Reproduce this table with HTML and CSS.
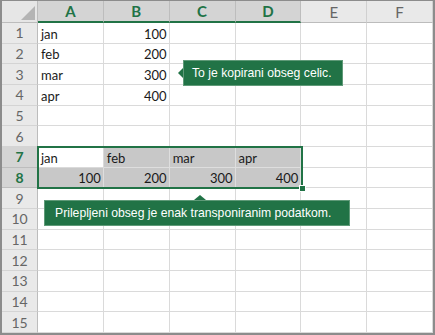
FILE: index.html
```html
<!DOCTYPE html>
<html>
<head>
<meta charset="utf-8">
<link rel="stylesheet" href="styles.css">
</head>
<body>
<div class="frame">
  <div class="sheet">
    <div class="corner"><svg width="14" height="14" viewBox="0 0 14 14"><polygon points="14,0 14,14 0,14" fill="#b4b4b4"/></svg></div>
    <div class="ch sel">A</div><div class="ch sel">B</div><div class="ch sel">C</div><div class="ch sel">D</div><div class="ch">E</div><div class="ch">F</div>

    <div class="rh">1</div><div class="c">jan</div><div class="c r">100</div><div class="c"></div><div class="c"></div><div class="c"></div><div class="c"></div>
    <div class="rh">2</div><div class="c">feb</div><div class="c r">200</div><div class="c"></div><div class="c"></div><div class="c"></div><div class="c"></div>
    <div class="rh">3</div><div class="c">mar</div><div class="c r">300</div><div class="c"></div><div class="c"></div><div class="c"></div><div class="c"></div>
    <div class="rh">4</div><div class="c">apr</div><div class="c r">400</div><div class="c"></div><div class="c"></div><div class="c"></div><div class="c"></div>
    <div class="rh">5</div><div class="c"></div><div class="c"></div><div class="c"></div><div class="c"></div><div class="c"></div><div class="c"></div>
    <div class="rh">6</div><div class="c"></div><div class="c"></div><div class="c"></div><div class="c"></div><div class="c"></div><div class="c"></div>
    <div class="rh sel">7</div><div class="c">jan</div><div class="c g">feb</div><div class="c g">mar</div><div class="c g">apr</div><div class="c"></div><div class="c"></div>
    <div class="rh sel">8</div><div class="c g r">100</div><div class="c g r">200</div><div class="c g r">300</div><div class="c g r">400</div><div class="c"></div><div class="c"></div>
    <div class="rh">9</div><div class="c"></div><div class="c"></div><div class="c"></div><div class="c"></div><div class="c"></div><div class="c"></div>
    <div class="rh">10</div><div class="c"></div><div class="c"></div><div class="c"></div><div class="c"></div><div class="c"></div><div class="c"></div>
    <div class="rh">11</div><div class="c"></div><div class="c"></div><div class="c"></div><div class="c"></div><div class="c"></div><div class="c"></div>
    <div class="rh">12</div><div class="c"></div><div class="c"></div><div class="c"></div><div class="c"></div><div class="c"></div><div class="c"></div>
    <div class="rh">13</div><div class="c"></div><div class="c"></div><div class="c"></div><div class="c"></div><div class="c"></div><div class="c"></div>
    <div class="rh">14</div><div class="c"></div><div class="c"></div><div class="c"></div><div class="c"></div><div class="c"></div><div class="c"></div>
    <div class="rh">15</div><div class="c"></div><div class="c"></div><div class="c"></div><div class="c"></div><div class="c"></div><div class="c"></div>
  </div>
  <div class="selection"><span class="handle"></span></div>
  <div class="callout callout-left">To je kopirani obseg celic.</div>
  <div class="callout callout-up">Prilepljeni obseg je enak transponiranim podatkom.</div>
</div>
</body>
</html>
```
FILE: styles.css
```css
html, body {
  margin: 0;
  padding: 0;
  background: #ffffff;
}
.frame {
  position: relative;
  width: 435px;
  height: 335px;
  box-sizing: border-box;
  border: 2px solid #8c8c8c;
  border-top-width: 1px;
  overflow: hidden;
  font-family: Lato, "Noto Sans", sans-serif;
}
.sheet {
  display: grid;
  grid-template-columns: 36px repeat(6, 1fr);
  grid-template-rows: 22px repeat(15, 1fr);
  height: 100%;
}
.corner {
  background: #e6e6e6;
  border-right: 1px solid #bcbcbc;
  border-bottom: 1px solid #bcbcbc;
  display: flex;
  align-items: flex-end;
  justify-content: flex-end;
  padding: 0 2px 2px 0;
  box-sizing: border-box;
}
.ch {
  background: #e9e9e9;
  border-right: 1px solid #d0d0d0;
  border-bottom: 1px solid #bcbcbc;
  color: #666666;
  font-size: 15px;
  display: flex;
  align-items: center;
  justify-content: center;
  box-sizing: border-box;
}
.ch.sel {
  background: #d4d4d4;
  color: #217346;
  font-weight: bold;
  border-bottom: 2px solid #217346;
  border-right-color: #bdbdbd;
}
.rh {
  background: #e9e9e9;
  border-right: 1px solid #bcbcbc;
  border-bottom: 1px solid #d4d4d4;
  color: #666666;
  font-size: 14px;
  display: flex;
  align-items: center;
  justify-content: center;
  box-sizing: border-box;
}
.rh.sel {
  background: #d4d4d4;
  color: #217346;
  font-weight: bold;
  border-bottom-color: #bdbdbd;
}
.c {
  border-right: 1px solid #dadada;
  border-bottom: 1px solid #dadada;
  font-size: 13px;
  color: #1a1a1a;
  display: flex;
  align-items: flex-end;
  padding: 0 2px 2px 3px;
  box-sizing: border-box;
  line-height: 1;
}
.c.r {
  justify-content: flex-end;
}
.c.g {
  background: #c8c8c8;
  border-color: #dedede;
}
.selection {
  position: absolute;
  left: 35px;
  top: 145px;
  width: 266px;
  height: 43px;
  box-sizing: border-box;
  border: 2px solid #217346;
}
.handle {
  position: absolute;
  right: -5px;
  bottom: -5px;
  width: 5px;
  height: 5px;
  background: #217346;
  border: 1px solid #ffffff;
}
.callout {
  position: absolute;
  height: 26px;
  box-sizing: border-box;
  background: #217346;
  border: 1px solid #5f9a78;
  color: #ffffff;
  font-family: "Liberation Sans", Arial, sans-serif;
  font-size: 12.2px;
  display: flex;
  align-items: center;
  white-space: nowrap;
}
.callout-left {
  left: 181px;
  top: 59px;
  width: 160px;
  padding-left: 8px;
}
.callout-left::before {
  content: "";
  position: absolute;
  left: -6px;
  top: 7px;
  border-top: 5px solid transparent;
  border-bottom: 5px solid transparent;
  border-right: 5px solid #217346;
}
.callout-up {
  left: 42px;
  top: 199px;
  width: 306px;
  padding-left: 10px;
}
.callout-up::before {
  content: "";
  position: absolute;
  left: 149px;
  top: -6px;
  border-left: 6px solid transparent;
  border-right: 6px solid transparent;
  border-bottom: 5px solid #217346;
}
```
